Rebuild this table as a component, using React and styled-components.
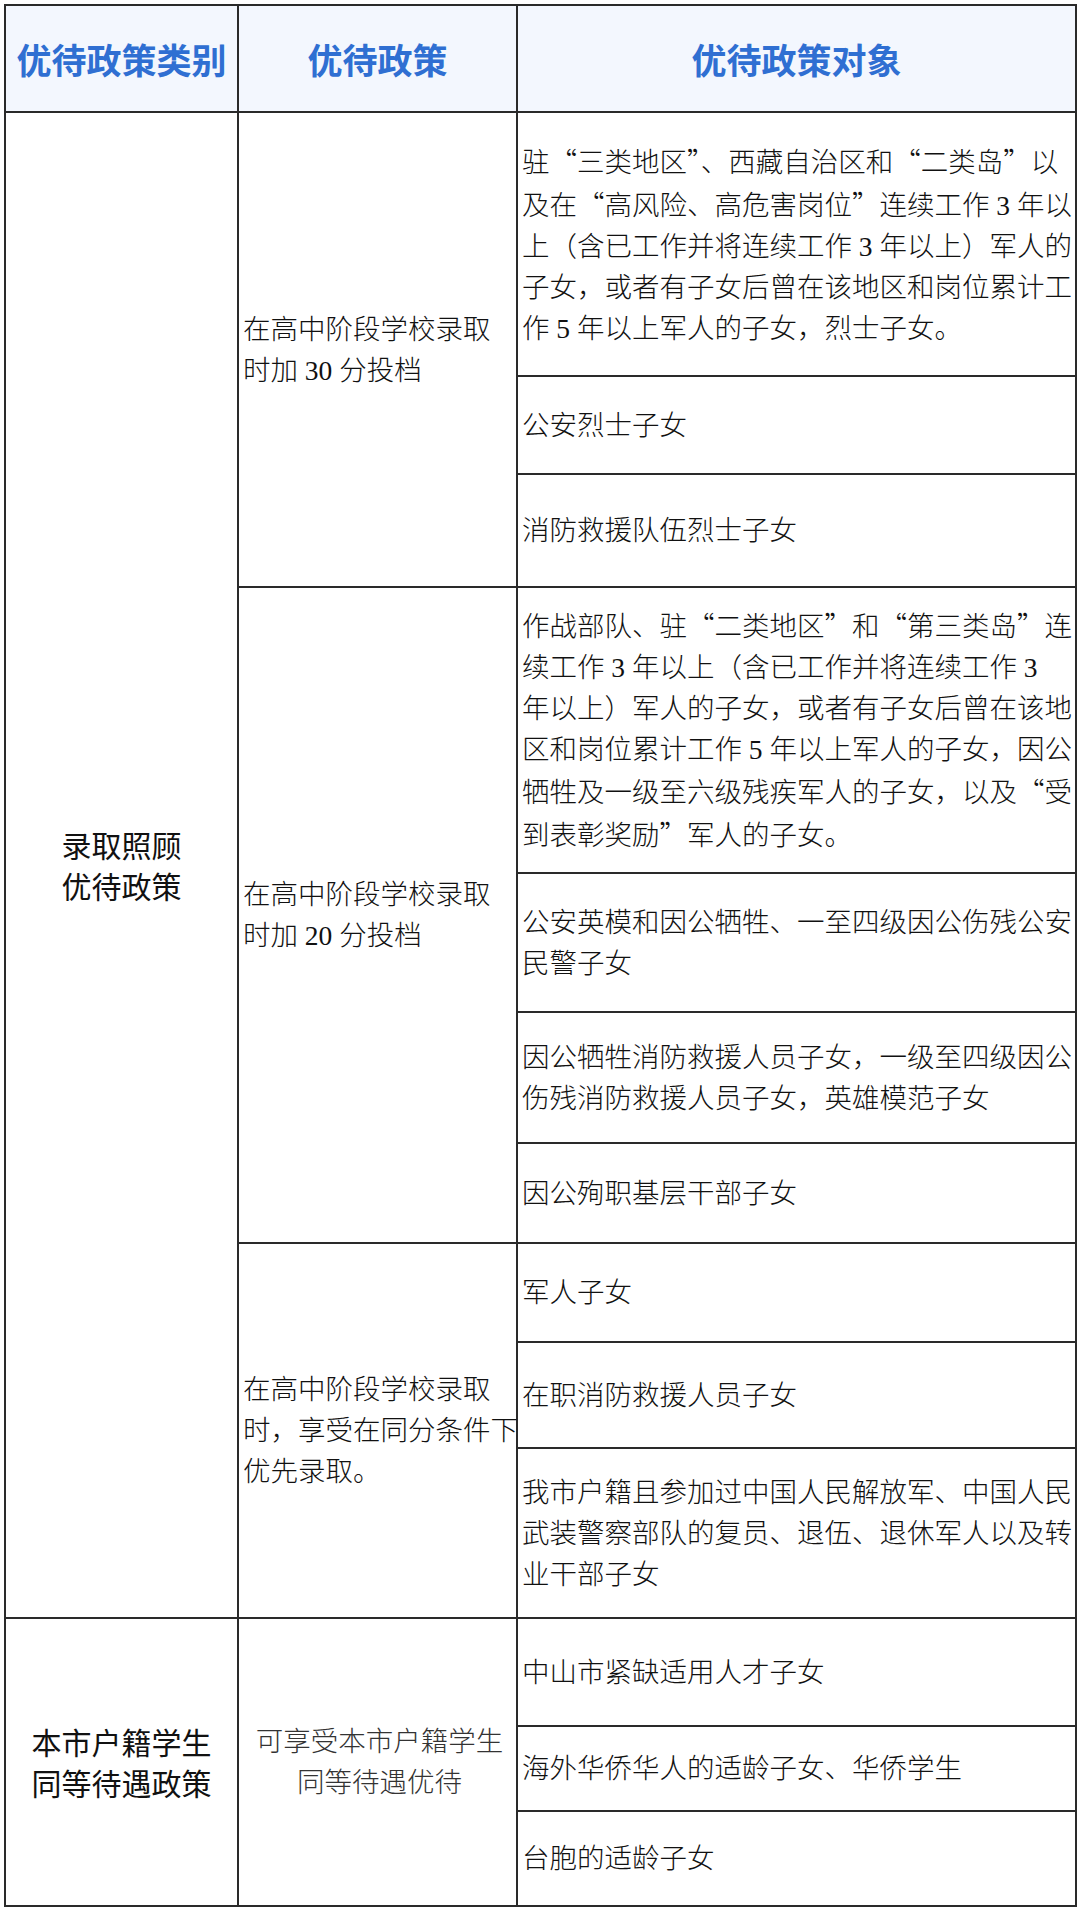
import React from 'react';
import styled, { createGlobalStyle } from 'styled-components';

const Global = createGlobalStyle`
  html, body { margin: 0; padding: 0; background: #ffffff; }
  body { font-family: "Noto Sans CJK SC", sans-serif; color: #111; }
`;

const Page = styled.div`
  padding: 4px 5px 4px 4px;
  width: 1080px;
  box-sizing: border-box;
`;

const Table = styled.table`
  width: 1071px;
  table-layout: fixed;
  border-collapse: collapse;
  border: 2px solid #2a2a2a;
`;

const Row = styled.tr`
  height: ${p => p.$h}px;
`;

const HeadCell = styled.th`
  background: #f3f7fe;
  border: 2px solid #2a2a2a;
  color: #2f6fd2;
  font-family: "Noto Sans CJK SC", sans-serif;
  font-weight: 700;
  font-size: 35px;
  line-height: 44px;
  text-align: center;
  vertical-align: middle;
  padding: 0;
  white-space: nowrap;
`;

const Cell = styled.td`
  border: 2px solid #2a2a2a;
  padding: 0 0 0 4px;
  vertical-align: middle;
  text-align: ${p => (p.$center ? 'center' : 'left')};
  font-family: "Liberation Serif", "Noto Sans CJK SC", serif;
  font-size: 27.5px;
  line-height: 41px;
  font-weight: 300;
  color: ${p => (p.$soft ? '#333' : '#111')};
  white-space: nowrap;
`;

const CategoryCell = styled.td`
  border: 2px solid #2a2a2a;
  padding: 0;
  vertical-align: middle;
  text-align: center;
  font-family: "Noto Sans CJK SC", sans-serif;
  font-size: 30px;
  line-height: 41px;
  font-weight: 400;
  color: #111;
  white-space: nowrap;
`;

const Q = styled.span`
  font-family: "Noto Sans CJK SC", sans-serif;
  font-feature-settings: "fwid";
`;

const T = ({ children }) => {
  const parts = [];
  String(children)
    .split('\n')
    .forEach((line, li) => {
      if (li > 0) parts.push(<br key={'br' + li} />);
      line.split(/([“”])/).forEach((seg, si) => {
        if (seg === '“' || seg === '”') parts.push(<Q key={li + '-' + si}>{seg}</Q>);
        else if (seg) parts.push(<React.Fragment key={li + '-' + si}>{seg}</React.Fragment>);
      });
    });
  return <>{parts}</>;
};

export default function App() {
  return (
    <Page>
      <Global />
      <Table>
        <colgroup>
          <col style={{ width: '233px' }} />
          <col style={{ width: '279px' }} />
          <col style={{ width: '559px' }} />
        </colgroup>
        <tbody>
          <Row $h={107}>
            <HeadCell>优待政策类别</HeadCell>
            <HeadCell>优待政策</HeadCell>
            <HeadCell>优待政策对象</HeadCell>
          </Row>

          <Row $h={264}>
            <CategoryCell rowSpan={10}>录取照顾<br />优待政策</CategoryCell>
            <Cell rowSpan={3}><T>{'在高中阶段学校录取\n时加 30 分投档'}</T></Cell>
            <Cell><T>{'驻“三类地区”、西藏自治区和“二类岛”以\n及在“高风险、高危害岗位”连续工作 3 年以\n上（含已工作并将连续工作 3 年以上）军人的\n子女，或者有子女后曾在该地区和岗位累计工\n作 5 年以上军人的子女，烈士子女。'}</T></Cell>
          </Row>
          <Row $h={98}>
            <Cell>公安烈士子女</Cell>
          </Row>
          <Row $h={113}>
            <Cell>消防救援队伍烈士子女</Cell>
          </Row>

          <Row $h={286}>
            <Cell rowSpan={4}><T>{'在高中阶段学校录取\n时加 20 分投档'}</T></Cell>
            <Cell><T>{'作战部队、驻“二类地区”和“第三类岛”连\n续工作 3 年以上（含已工作并将连续工作 3\n年以上）军人的子女，或者有子女后曾在该地\n区和岗位累计工作 5 年以上军人的子女，因公\n牺牲及一级至六级残疾军人的子女，以及“受\n到表彰奖励”军人的子女。'}</T></Cell>
          </Row>
          <Row $h={139}>
            <Cell><T>{'公安英模和因公牺牲、一至四级因公伤残公安\n民警子女'}</T></Cell>
          </Row>
          <Row $h={131}>
            <Cell><T>{'因公牺牲消防救援人员子女，一级至四级因公\n伤残消防救援人员子女，英雄模范子女'}</T></Cell>
          </Row>
          <Row $h={100}>
            <Cell>因公殉职基层干部子女</Cell>
          </Row>

          <Row $h={99}>
            <Cell rowSpan={3}><T>{'在高中阶段学校录取\n时，享受在同分条件下\n优先录取。'}</T></Cell>
            <Cell>军人子女</Cell>
          </Row>
          <Row $h={106}>
            <Cell>在职消防救援人员子女</Cell>
          </Row>
          <Row $h={170}>
            <Cell><T>{'我市户籍且参加过中国人民解放军、中国人民\n武装警察部队的复员、退伍、退休军人以及转\n业干部子女'}</T></Cell>
          </Row>

          <Row $h={108}>
            <CategoryCell rowSpan={3}>本市户籍学生<br />同等待遇政策</CategoryCell>
            <Cell rowSpan={3} $center $soft><T>{'可享受本市户籍学生\n同等待遇优待'}</T></Cell>
            <Cell>中山市紧缺适用人才子女</Cell>
          </Row>
          <Row $h={85}>
            <Cell>海外华侨华人的适龄子女、华侨学生</Cell>
          </Row>
          <Row $h={95}>
            <Cell>台胞的适龄子女</Cell>
          </Row>
        </tbody>
      </Table>
    </Page>
  );
}
